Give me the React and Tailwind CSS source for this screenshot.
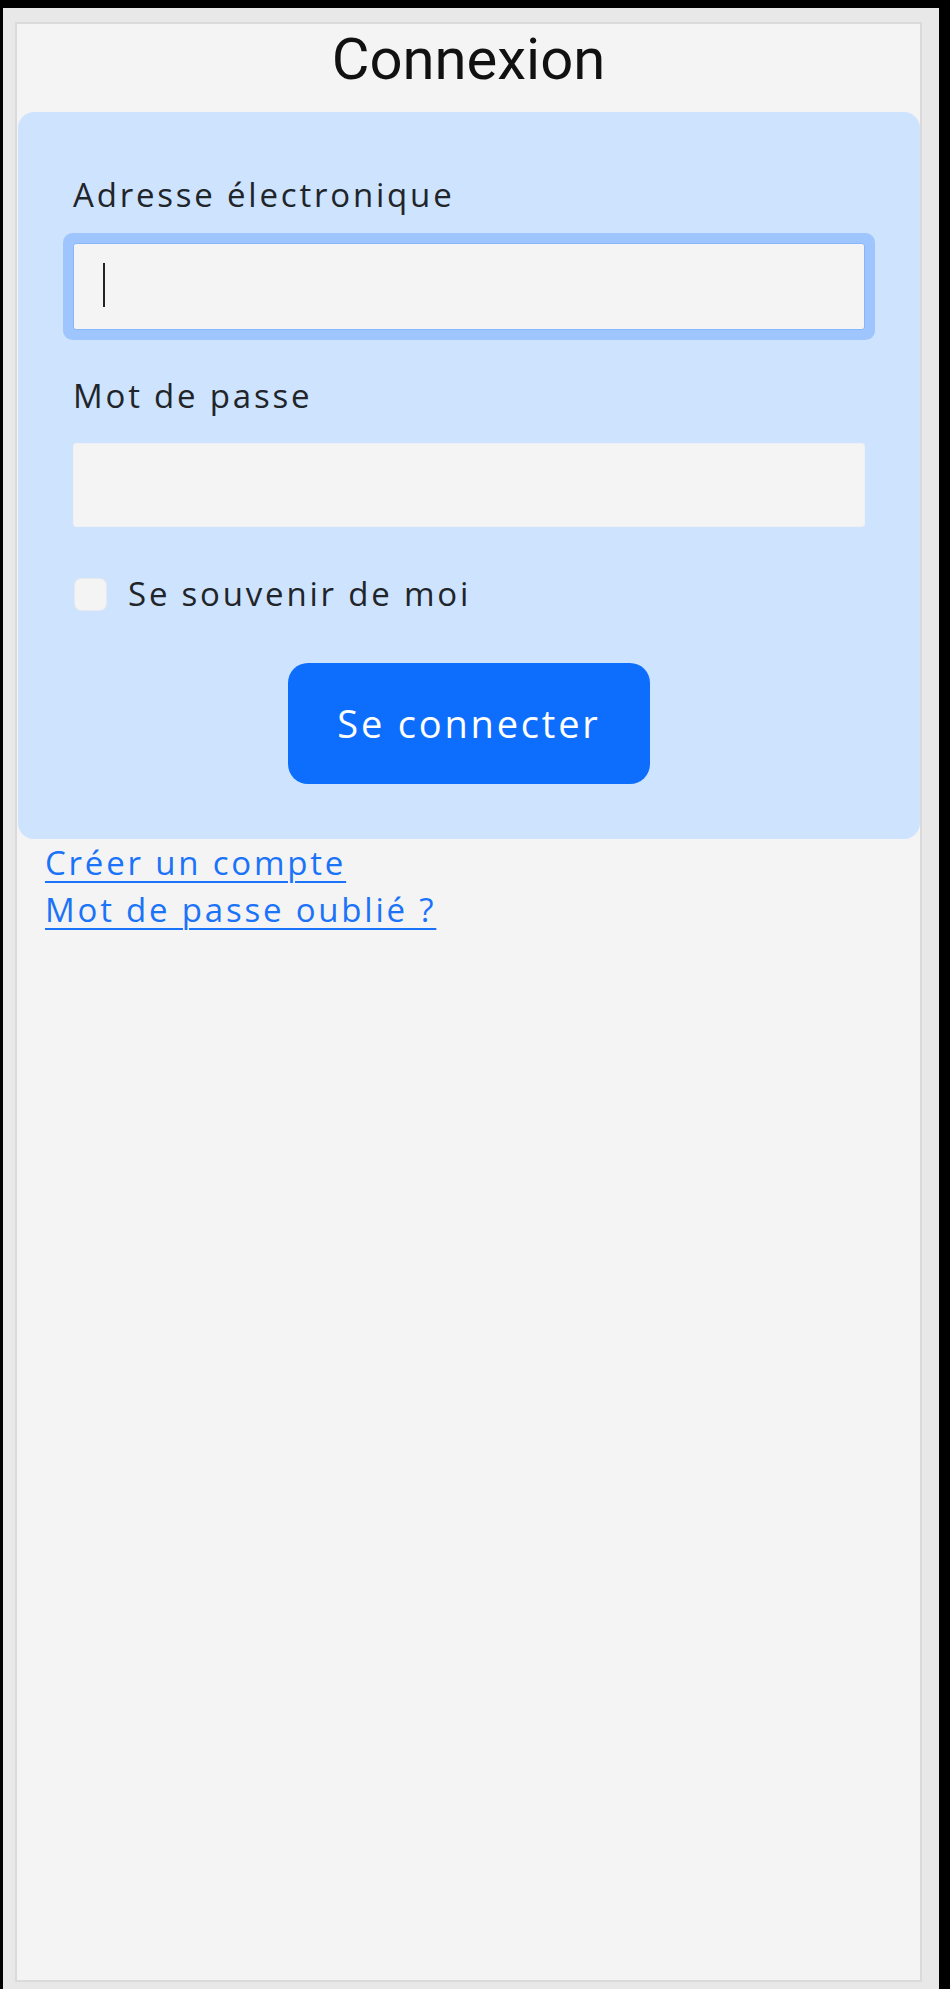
import React from "react";

export default function App() {
  const body = { fontFamily: '"Open Sans", "Noto Sans", sans-serif' };
  return (
    <div className="bg-black w-[950px] h-[1989px] overflow-hidden pt-[8px] pl-[3px]">
      <div className="w-[936px] h-[1981px] bg-[#e8e8e8] pt-[14px] pl-[12px]">
        <div
          className="w-[907px] h-[1960px] border-2 border-[#dadada] bg-[#f4f4f4] flex flex-col"
          style={body}
        >
          <div className="h-[88px] pt-[5px]">
            <h1
              className="text-center leading-[60px] text-[58px] text-[#111] font-normal"
              style={{ fontFamily: 'Roboto, "Noto Sans", sans-serif' }}
            >
              Connexion
            </h1>
          </div>
          <div className="ml-px h-[727px] rounded-[16px] bg-[#cde3fe] px-[55px] pt-[58px] flex flex-col">
            <label className="h-[50px] leading-[50px] text-[33px] text-[#212529] tracking-[2.8px]">
              Adresse électronique
            </label>
            <div className="relative mt-[23px] h-[87px] rounded-[3px] border border-[#86b7fe] bg-[#f4f4f4] shadow-[0_0_0_10px_#9fc5fe]">
              <span className="absolute left-[29px] top-[19px] h-[44px] w-[2px] bg-[#222]" />
            </div>
            <label className="mt-[41px] h-[50px] leading-[50px] text-[33px] text-[#212529] tracking-[2.8px]">
              Mot de passe
            </label>
            <div className="mt-[22px] h-[84px] rounded-[3px] border border-[#eef0f3] bg-[#f4f4f4]" />
            <div className="mt-[42px] h-[50px] flex items-center">
              <span className="ml-px w-[33px] h-[33px] rounded-[7px] bg-[#f4f4f4] border border-[#e6e9ee]" />
              <span className="ml-[21px] text-[33px] leading-[50px] text-[#212529] tracking-[2.8px]">
                Se souvenir de moi
              </span>
            </div>
            <div className="mt-[44px] flex justify-center">
              <button className="w-[362px] h-[121px] rounded-[20px] bg-[#0d6efd] text-white text-[38px] tracking-[2.8px]">
                Se connecter
              </button>
            </div>
          </div>
          <div className="pl-[28px] flex flex-col items-start">
            <a className="h-[47px] leading-[47px] text-[33px] text-[#1a73f8] underline underline-offset-[6px] decoration-[2px] tracking-[2.8px]">
              Créer un compte
            </a>
            <a className="h-[47px] leading-[47px] text-[33px] text-[#1a73f8] underline underline-offset-[6px] decoration-[2px] tracking-[2.8px]">
              Mot de passe oublié ?
            </a>
          </div>
        </div>
      </div>
    </div>
  );
}
